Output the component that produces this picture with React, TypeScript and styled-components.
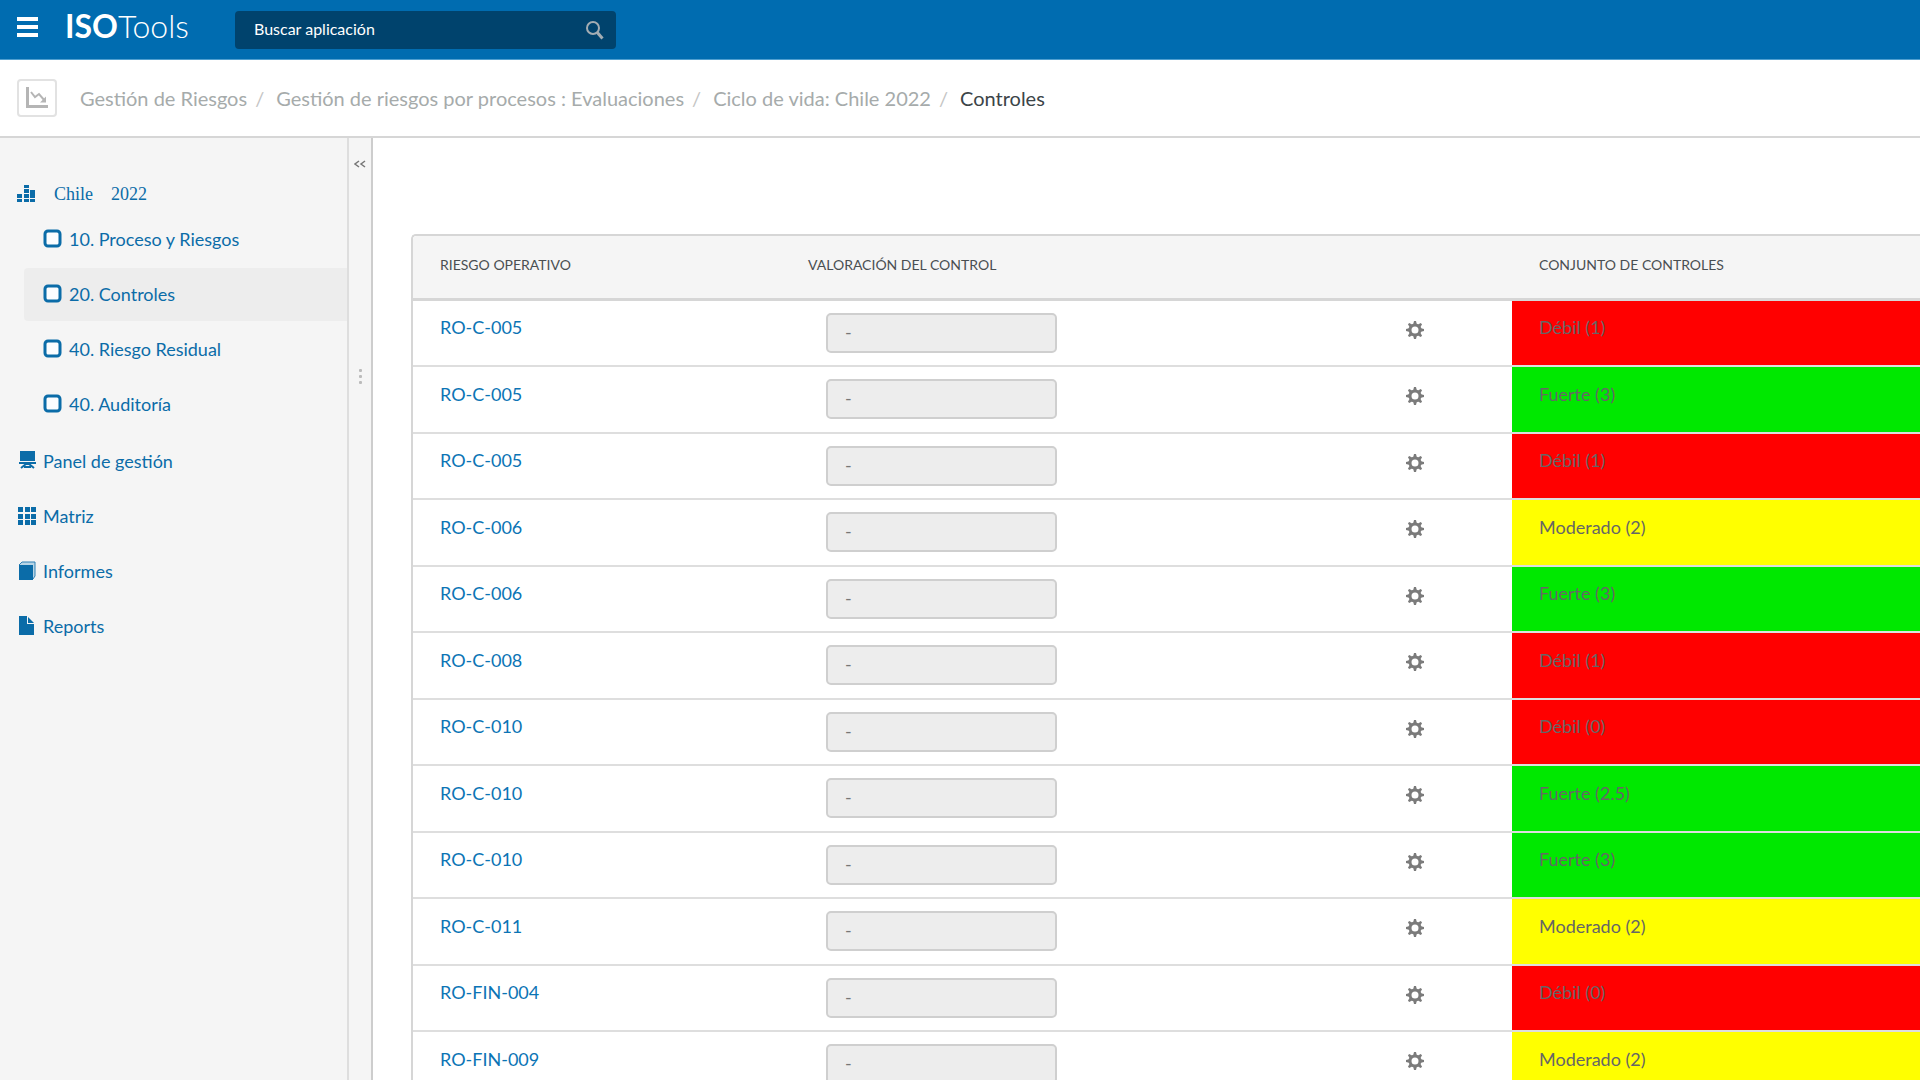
import React from "react";
import styled, { createGlobalStyle } from "styled-components";

const GlobalStyle = createGlobalStyle`
  *, *::before, *::after { box-sizing: border-box; }
  body {
    margin: 0;
    background: #fff;
    color: #666;
    font-family: Lato, "Open Sans", sans-serif;
    font-size: 18px;
  }
  a { color: inherit; text-decoration: none; }
  ul, ol { list-style: none; margin: 0; padding: 0; }
  button { border: 0; padding: 0; background: none; color: inherit; font: inherit; cursor: pointer; }
  svg { display: block; flex: none; }
`;

type Level = "Débil" | "Moderado" | "Fuerte";

const levelColor: Record<Level, string> = {
  Débil: "#ff0000",
  Moderado: "#ffff00",
  Fuerte: "#00e800",
};

const rows: { code: string; level: Level; score: string }[] = [
  { code: "RO-C-005", level: "Débil", score: "1" },
  { code: "RO-C-005", level: "Fuerte", score: "3" },
  { code: "RO-C-005", level: "Débil", score: "1" },
  { code: "RO-C-006", level: "Moderado", score: "2" },
  { code: "RO-C-006", level: "Fuerte", score: "3" },
  { code: "RO-C-008", level: "Débil", score: "1" },
  { code: "RO-C-010", level: "Débil", score: "0" },
  { code: "RO-C-010", level: "Fuerte", score: "2.5" },
  { code: "RO-C-010", level: "Fuerte", score: "3" },
  { code: "RO-C-011", level: "Moderado", score: "2" },
  { code: "RO-FIN-004", level: "Débil", score: "0" },
  { code: "RO-FIN-009", level: "Moderado", score: "2" },
];

const Page = styled.div`
  display: flex;
  flex-direction: column;
  height: 100vh;
  overflow: hidden;
`;

const TopBar = styled.header`
  display: flex;
  flex: none;
  align-items: center;
  height: 60px;
  padding: 0 17px;
  background: #006cb0;
  border-bottom: 1px solid #4f9fd0;
`;

const MenuButton = styled.button`
  display: flex;
  flex-direction: column;
  gap: 4px;
  width: 21px;
  margin-bottom: 6px;
`;

const MenuBar = styled.span`
  height: 4px;
  background: #fff;
`;

const Logo = styled.a`
  width: 170px;
  margin-left: 27px;
  padding-bottom: 8px;
  color: #fff;
  font-size: 32px;
  line-height: 36px;
  font-weight: 300;
  white-space: nowrap;

  strong { font-weight: 700; }
`;

const SearchBox = styled.form`
  display: flex;
  align-items: center;
  width: 381px;
  height: 38px;
  padding: 0 12px 0 19px;
  border-radius: 4px;
  background: #00436d;
  color: #a3adb3;
`;

const SearchInput = styled.input`
  flex: 1;
  min-width: 0;
  padding: 0 0 2px;
  border: 0;
  outline: 0;
  background: none;
  color: #fff;
  font: 400 16px Lato, sans-serif;

  &::placeholder { color: #fff; opacity: 1; }
`;

const CrumbBar = styled.nav`
  display: flex;
  flex: none;
  align-items: center;
  height: 78px;
  padding: 0 17px;
  border-bottom: 2px solid #d6d6d6;
`;

const CrumbIcon = styled.span`
  display: flex;
  align-items: center;
  justify-content: center;
  width: 40px;
  height: 38px;
  margin-right: 23px;
  border: 2px solid #e2e2e2;
  border-radius: 4px;
  color: #b5b5b5;
`;

const Crumbs = styled.ol`
  display: flex;
  color: #a6abab;
  font-size: 20px;
  line-height: 24px;
`;

const Crumb = styled.li`
  &:not(:last-child)::after {
    content: "/";
    margin: 0 12px 0 8px;
    color: #c4c4c4;
  }

  &:last-child { color: #3c4448; }
`;

const Body = styled.div`
  display: flex;
  flex: 1;
  min-height: 0;
`;

const Sidebar = styled.aside`
  flex: none;
  width: 347px;
  padding-top: 38px;
  background: #f5f5f5;
  color: #0b6ca8;
`;

const TreeHeading = styled.a`
  display: flex;
  align-items: center;
  height: 37px;
  padding-left: 17px;
  font-family: "Liberation Serif", serif;
`;

const TreeName = styled.span`
  margin: 0 18px;
`;

const NavList = styled.ul<{ $nested?: boolean }>`
  display: flex;
  flex-direction: column;
  gap: 2px;
  margin-left: ${(p) => (p.$nested ? 24 : 0)}px;
  margin-bottom: ${(p) => (p.$nested ? 4 : 0)}px;
`;

const NavLink = styled.a<{ $nested?: boolean; $active?: boolean }>`
  display: flex;
  align-items: center;
  gap: 7px;
  height: 53px;
  padding-left: ${(p) => (p.$nested ? 19 : 18)}px;
  padding-bottom: 2px;
  border-radius: 4px 0 0 4px;
  background: ${(p) => (p.$active ? "#ededed" : "none")};
`;

const Splitter = styled.div`
  display: flex;
  flex: none;
  flex-direction: column;
  align-items: center;
  gap: 201px;
  width: 26px;
  padding-top: 22px;
  border-left: 2px solid #dedede;
  border-right: 2px solid #cdcdcd;
  background: #f5f5f5;
  color: #777;
`;

const Grip = styled.span`
  display: flex;
  flex-direction: column;
  gap: 3px;

  i {
    width: 3px;
    height: 3px;
    border-radius: 1px;
    background: #bbb;
  }
`;

const Content = styled.main`
  flex: 1;
  min-width: 0;
  padding: 96px 0 0 38px;
  overflow: hidden;
`;

const Table = styled.table`
  width: 100%;
  table-layout: fixed;
  border-spacing: 0;
  border-top: 2px solid #d6d6d6;
  border-left: 2px solid #d6d6d6;
  border-top-left-radius: 5px;
  text-align: left;

  tbody tr { height: 66px; }
  tbody tr:nth-child(even) { height: 67px; }
`;

const CodeCol = styled.col`
  width: 368px;
`;

const SetCol = styled.col`
  width: 408px;
`;

const HeadCell = styled.th`
  height: 65px;
  padding: 0 27px 6px;
  border-bottom: 3px solid #d6d6d6;
  background: #f5f5f5;
  color: #4a4f52;
  font-size: 14px;
  font-weight: 400;
  text-transform: uppercase;

  &:first-child { border-top-left-radius: 4px; }
`;

const Cell = styled.td<{ $fill?: string }>`
  padding: 14px 27px 0;
  border-bottom: 2px solid #dedede;
  background: ${(p) => p.$fill ?? "#fff"};
  background-clip: padding-box;
  line-height: 24px;
  vertical-align: top;

  tr:nth-child(even) > & { padding-top: 15px; }
`;

const ControlCell = styled.td`
  padding: 12px 87px 0 45px;
  border-bottom: 2px solid #dedede;
  vertical-align: top;
`;

const CodeLink = styled.a`
  color: #0b74b5;
`;

const Control = styled.div`
  display: flex;
  align-items: flex-start;
  justify-content: space-between;
`;

const ValueInput = styled.input`
  width: 231px;
  height: 40px;
  padding: 0 17px 2px;
  border: 2px solid #cfcfcf;
  border-radius: 5px;
  background: #ededed;
  color: #777;
  font: 400 18px Lato, sans-serif;
`;

const GearButton = styled.button`
  margin-top: 7px;
  color: #7b7b7b;
`;

const SearchIcon = () => (
  <svg width="18" height="20" viewBox="0 0 18 20" fill="none" stroke="currentColor" strokeWidth="2">
    <circle cx="7" cy="8" r="6" />
    <path d="M11.300 12.500L16.500 18.500" strokeWidth="3" />
  </svg>
);

const ChartIcon = () => (
  <svg width="24" height="22" viewBox="0 0 24 22" fill="none" stroke="currentColor">
    <path d="M2.500 0v19.500H23" strokeWidth="3" />
    <path d="M6 5l4 5 4-3 6 7" strokeWidth="2" />
    <path d="M21 9.500v6h-6z" fill="currentColor" stroke="none" />
  </svg>
);

const StepsIcon = () => (
  <svg width="19" height="20" viewBox="0 0 19 20" fill="currentColor">
    <path d="M0 9h5v4H0zM0 14h5v3H0zM7 0h5v3H7zM7 4h5v4H7zM7 9h5v4H7zM7 14h5v3H7zM13 5h5v3h-5zM13 8h5v5h-5zM13 14h5v3h-5z" />
  </svg>
);

const SquareIcon = () => (
  <svg width="19" height="19" viewBox="0 0 19 19">
    <rect x="2" y="2" width="15" height="15" rx="3" fill="#fbfdff" stroke="currentColor" strokeWidth="3" />
  </svg>
);

const PanelIcon = () => (
  <svg width="18" height="19" viewBox="0 0 18 19" fill="currentColor">
    <path d="M2 0h15v10H2zM1 11h17v2H1z" />
    <path d="M3 17l5-4h3l5 4M6 16h7" fill="none" stroke="currentColor" strokeWidth="2" />
  </svg>
);

const GridIcon = () => (
  <svg width="18" height="18" viewBox="0 0 18 18" fill="currentColor">
    {[0, 7, 13].map((y) => [0, 7, 13].map((x) => <rect key={`${x}-${y}`} x={x} y={y} width="5" height="5" />))}
  </svg>
);

const BookIcon = () => (
  <svg width="18" height="20" viewBox="0 0 18 20">
    <path d="M1 4l3-3h13v14l-2 3" fill="#b9d5e6" stroke="#2f80b4" strokeWidth="1" />
    <path d="M1 4h14v15H1z" fill="currentColor" />
  </svg>
);

const FileIcon = () => (
  <svg width="18" height="20" viewBox="0 0 18 20" fill="currentColor">
    <path d="M1 0h8v8h7v11H1z" />
    <path d="M10 1l6 6h-6z" />
  </svg>
);

const CollapseIcon = () => (
  <svg width="12" height="8" viewBox="0 0 12 8" fill="none" stroke="currentColor" strokeWidth="1.500">
    <path d="M5 1L1 4l4 3M11 1L7 4l4 3" />
  </svg>
);

const GearIcon = () => (
  <svg width="20" height="20" viewBox="0 0 20 20" fill="none" stroke="currentColor">
    <circle cx="10" cy="10" r="5" strokeWidth="3" />
    {[0, 45, 90, 135, 180, 225, 270, 315].map((a) => (
      <path key={a} d="M8 5l1-4h2l1 4z" fill="currentColor" stroke="none" transform={`rotate(${a} 10 10)`} />
    ))}
  </svg>
);

const steps = ["10. Proceso y Riesgos", "20. Controles", "40. Riesgo Residual", "40. Auditoría"];

const sections = [
  { label: "Panel de gestión", Icon: PanelIcon },
  { label: "Matriz", Icon: GridIcon },
  { label: "Informes", Icon: BookIcon },
  { label: "Reports", Icon: FileIcon },
];

const trail = [
  "Gestión de Riesgos",
  "Gestión de riesgos por procesos : Evaluaciones",
  "Ciclo de vida: Chile 2022",
];

export default function App() {
  return (
    <Page>
      <GlobalStyle />
      <TopBar>
        <MenuButton type="button" aria-label="Menú">
          <MenuBar />
          <MenuBar />
          <MenuBar />
        </MenuButton>
        <Logo href="#">
          <strong>ISO</strong>Tools
        </Logo>
        <SearchBox role="search">
          <SearchInput type="text" aria-label="Buscar aplicación" placeholder="Buscar aplicación" />
          <button type="button" aria-label="Buscar">
            <SearchIcon />
          </button>
        </SearchBox>
      </TopBar>

      <CrumbBar aria-label="Ruta">
        <CrumbIcon>
          <ChartIcon />
        </CrumbIcon>
        <Crumbs>
          {trail.map((item) => (
            <Crumb key={item}>
              <a href="#">{item}</a>
            </Crumb>
          ))}
          <Crumb aria-current="page">Controles</Crumb>
        </Crumbs>
      </CrumbBar>

      <Body>
        <Sidebar>
          <TreeHeading href="#">
            <StepsIcon />
            <TreeName>Chile</TreeName>
            <span>2022</span>
          </TreeHeading>
          <NavList $nested>
            {steps.map((label) => (
              <li key={label}>
                <NavLink href="#" $nested $active={label === "20. Controles"}>
                  <SquareIcon />
                  {label}
                </NavLink>
              </li>
            ))}
          </NavList>
          <NavList>
            {sections.map(({ label, Icon }) => (
              <li key={label}>
                <NavLink href="#">
                  <Icon />
                  {label}
                </NavLink>
              </li>
            ))}
          </NavList>
        </Sidebar>

        <Splitter>
          <button type="button" aria-label="Contraer panel">
            <CollapseIcon />
          </button>
          <Grip>
            <i />
            <i />
            <i />
          </Grip>
        </Splitter>

        <Content>
          <Table>
            <colgroup>
              <CodeCol />
              <col />
              <SetCol />
            </colgroup>
            <thead>
              <tr>
                <HeadCell scope="col">Riesgo operativo</HeadCell>
                <HeadCell scope="col">Valoración del control</HeadCell>
                <HeadCell scope="col">Conjunto de controles</HeadCell>
              </tr>
            </thead>
            <tbody>
              {rows.map((row, i) => (
                <tr key={i}>
                  <Cell>
                    <CodeLink href="#">{row.code}</CodeLink>
                  </Cell>
                  <ControlCell>
                    <Control>
                      <ValueInput type="text" value="-" disabled aria-label={`Valoración de ${row.code}`} />
                      <GearButton type="button" aria-label={`Configurar ${row.code}`}>
                        <GearIcon />
                      </GearButton>
                    </Control>
                  </ControlCell>
                  <Cell $fill={levelColor[row.level]}>
                    {row.level} ({row.score})
                  </Cell>
                </tr>
              ))}
            </tbody>
          </Table>
        </Content>
      </Body>
    </Page>
  );
}
